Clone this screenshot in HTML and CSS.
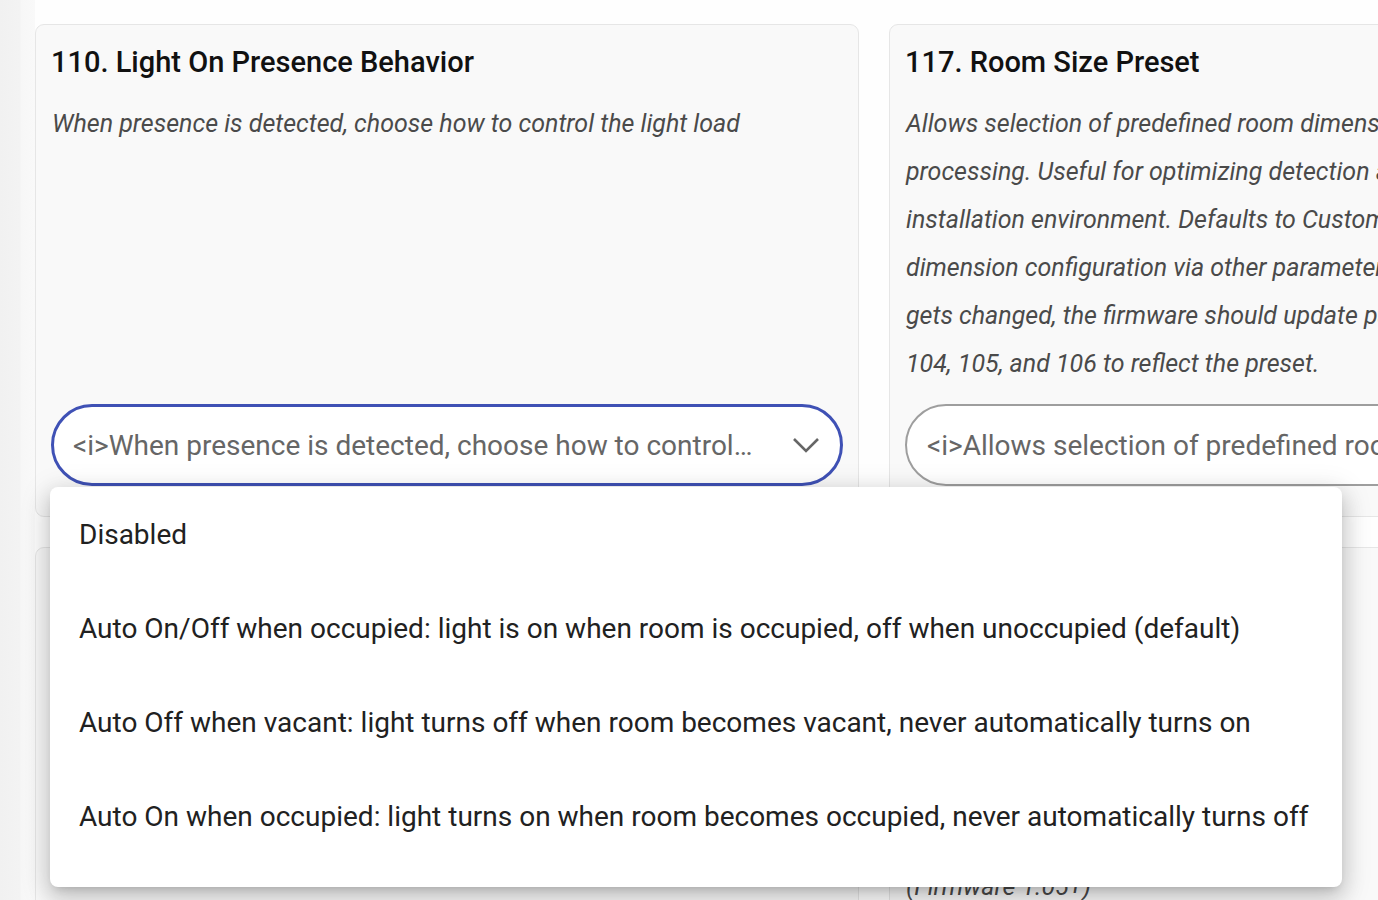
FILE: index.html
```html
<!DOCTYPE html>
<html lang="en">
<head>
<meta charset="utf-8">
<title>Parameters</title>
<link rel="stylesheet" href="styles.css">
</head>
<body>
<div class="page">
  <div class="rail"></div>
  <main class="content">
    <div class="grid">
      <section class="card">
        <h2 class="card-title">110. Light On Presence Behavior</h2>
        <p class="card-desc">When presence is detected, choose how to control the light load</p>
        <div class="select focused">
          <span class="select-text">&lt;i&gt;When presence is detected, choose how to control the light load&lt;/i&gt;</span>
          <svg class="chevron" width="28" height="16" viewBox="0 0 28 16"><polyline points="2,2 14,14 26,2" fill="none" stroke="#666" stroke-width="2.6"/></svg>
        </div>
      </section>
      <section class="card">
        <h2 class="card-title">117. Room Size Preset</h2>
        <p class="card-desc">Allows selection of predefined room dimensions for radar<br>processing. Useful for optimizing detection accuracy in the<br>installation environment. Defaults to Custom, which allows<br>dimension configuration via other parameters. If this value<br>gets changed, the firmware should update parameters 103,<br>104, 105, and 106 to reflect the preset.</p>
        <div class="select">
          <span class="select-text">&lt;i&gt;Allows selection of predefined room dimensions for radar processing&lt;/i&gt;</span>
          <svg class="chevron" width="28" height="16" viewBox="0 0 28 16"><polyline points="2,2 14,14 26,2" fill="none" stroke="#666" stroke-width="2.6"/></svg>
        </div>
      </section>
      <section class="card">
        <h2 class="card-title">111. Light Off Timeout</h2>
        <p class="card-desc">Time to wait after the room becomes vacant<br>before turning off the light load</p>
      </section>
      <section class="card">
        <h2 class="card-title">118. Detection Sensitivity</h2>
        <p class="card-desc">Adjusts radar sensitivity.<br>Higher values detect<br>smaller movements,<br>lower values reduce<br>false triggers.<br>(Firmware 1.05+)</p>
      </section>
    </div>
  </main>
</div>
<ul class="menu">
  <li class="menu-item">Disabled</li>
  <li class="menu-item">Auto On/Off when occupied: light is on when room is occupied, off when unoccupied (default)</li>
  <li class="menu-item">Auto Off when vacant: light turns off when room becomes vacant, never automatically turns on</li>
  <li class="menu-item">Auto On when occupied: light turns on when room becomes occupied, never automatically turns off</li>
</ul>
</body>
</html>
```
FILE: styles.css
```css
html, body {
  margin: 0;
  padding: 0;
  height: 100%;
  overflow: hidden;
  background: #fefefe;
  font-family: Roboto, "Liberation Sans", sans-serif;
}
.page {
  display: flex;
  height: 900px;
}
.rail {
  flex: 0 0 35px;
  background: linear-gradient(to right, #f1f1f1 0, #f3f3f3 20px, #f7f7f7 21px, #f9f9f9 35px);
}
.content {
  flex: 1;
  padding-top: 24px;
  overflow: hidden;
}
.grid {
  display: grid;
  grid-template-columns: 824px 824px;
  column-gap: 30px;
  row-gap: 30px;
}
.card {
  background: #f9f9f9;
  border: 1px solid #e6e6e6;
  border-radius: 9px;
  padding: 15px 15px 30px 15px;
  display: flex;
  flex-direction: column;
  box-sizing: border-box;
}
.card-title {
  margin: 1px 0 0 0;
  font-size: 29px;
  font-weight: 500;
  line-height: 42px;
  color: #111;
}
.card-desc {
  margin: 17px 0 0 1px;
  font-size: 25px;
  font-style: italic;
  line-height: 48px;
  color: #4a4a4a;
  white-space: nowrap;
}
.select {
  margin-top: auto;
  height: 82px;
  box-sizing: border-box;
  border: 2px solid #9e9e9e;
  border-radius: 41px;
  background: #fff;
  display: flex;
  align-items: center;
  padding: 0 18px 0 20px;
  gap: 34px;
}
.card-desc + .select { margin-top: 16px; }
.card:first-child .select { margin-top: auto; }
.select.focused {
  border: 3px solid #3f51b5;
  padding-left: 19px;
}
.select-text {
  flex: 1;
  min-width: 0;
  font-size: 28px;
  color: #666;
  white-space: nowrap;
  overflow: hidden;
  text-overflow: ellipsis;
}
.chevron {
  flex: 0 0 auto;
  margin-right: 2px;
}
.menu {
  position: absolute;
  left: 50px;
  top: 487px;
  width: 1292px;
  margin: 0;
  padding: 0 0 24px 0;
  list-style: none;
  background: #fff;
  border-radius: 8px;
  box-shadow: 0 10px 22px 2px rgba(0,0,0,0.14), 0 6px 28px 5px rgba(0,0,0,0.10), 0 5px 10px -5px rgba(0,0,0,0.2);
}
.menu-item {
  height: 94px;
  display: flex;
  align-items: center;
  padding: 0 28px 0 29px;
  font-size: 28px;
  color: #212121;
  white-space: nowrap;
}
```
